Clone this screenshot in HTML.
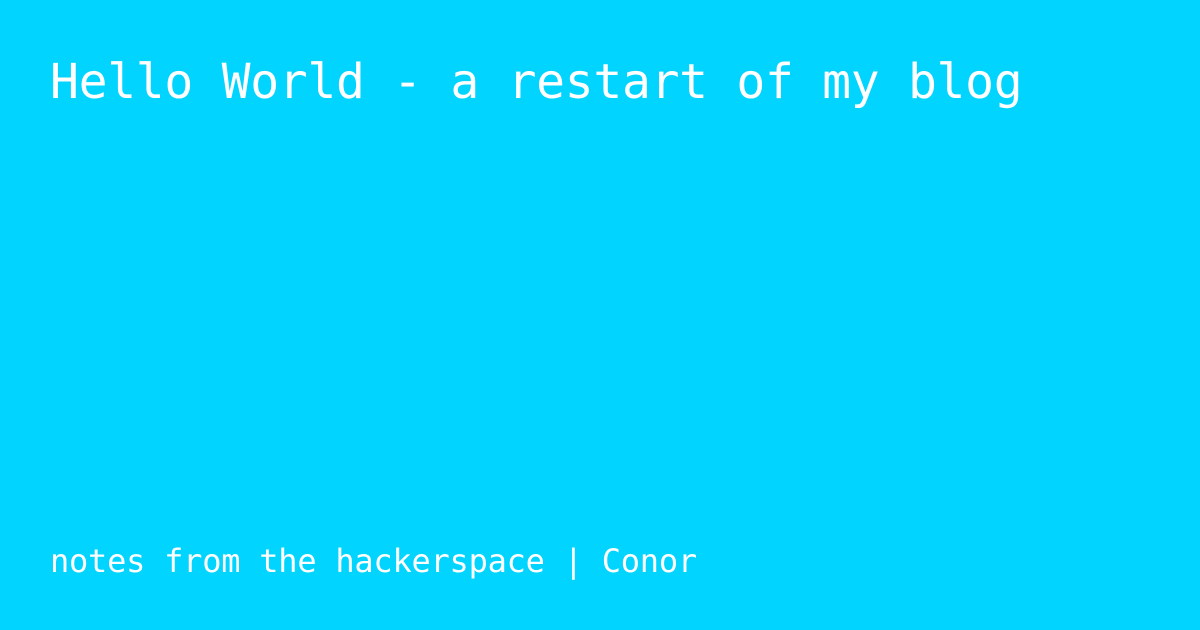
<!DOCTYPE html>
<html><head><meta charset="utf-8"><style>
html,body{margin:0;padding:0}
body{width:1200px;height:630px;background:#00d4ff;position:relative;overflow:hidden;font-family:"DejaVu Sans Mono","Liberation Mono",monospace;color:#fff}
.t{position:absolute;left:50px;top:52px;font-size:48px;line-height:60px;white-space:nowrap;letter-spacing:-0.3px}
.f{position:absolute;left:50px;top:541px;font-size:32px;line-height:40px;white-space:nowrap;letter-spacing:-0.24px}
</style></head><body>
<div class="t">Hello World - a restart of my blog</div>
<div class="f">notes from the hackerspace | Conor</div>
</body></html>
